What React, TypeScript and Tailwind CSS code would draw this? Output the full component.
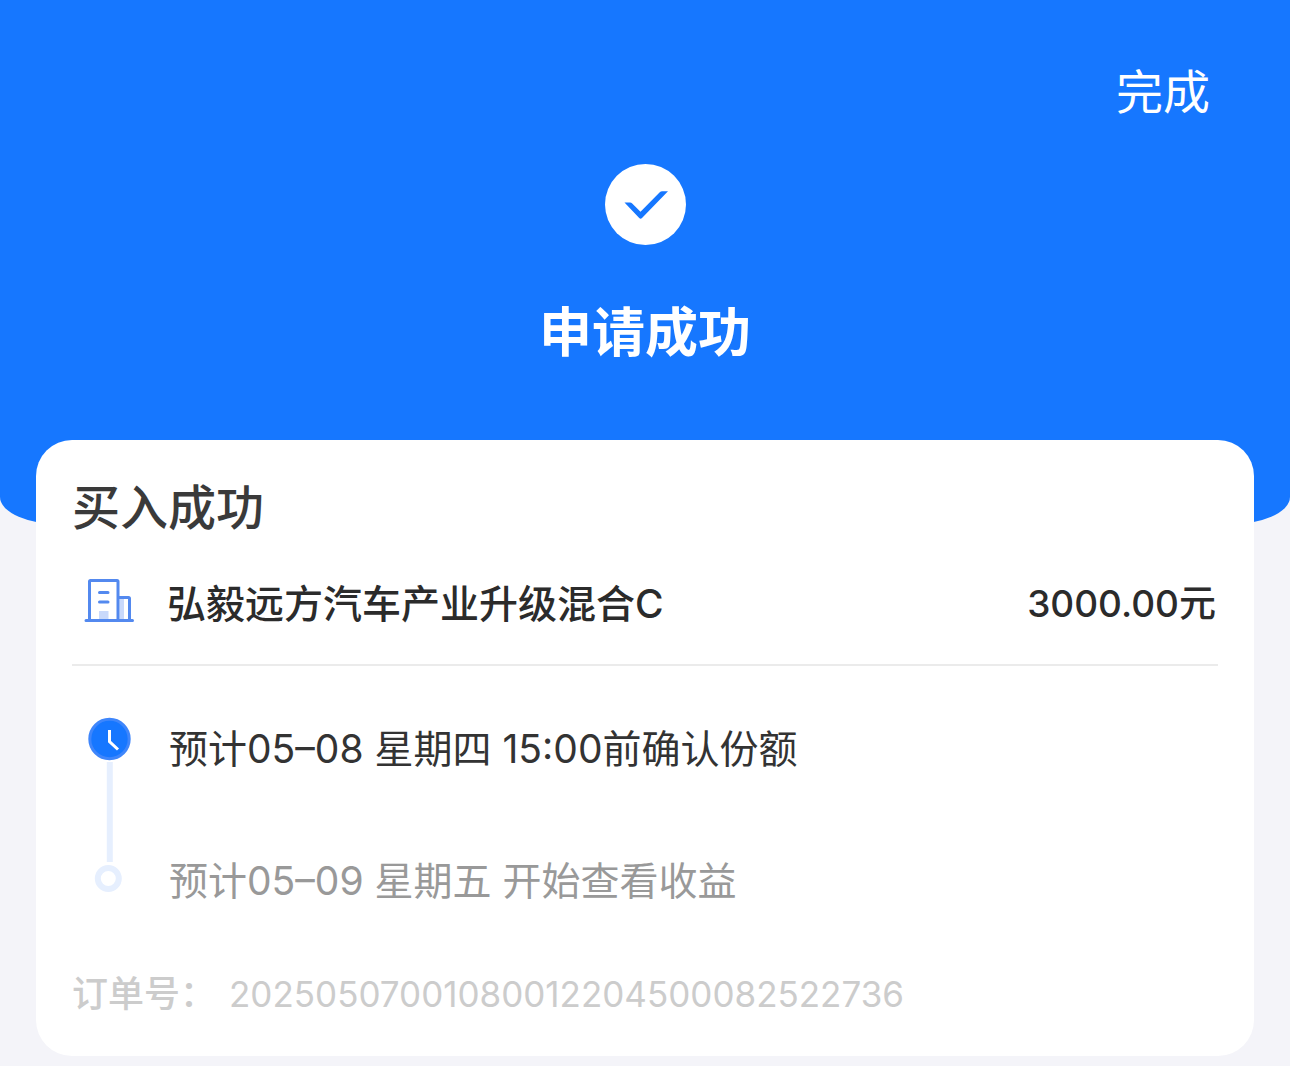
const steps = [
  { text: "预计05–08 星期四 15:00前确认份额", tone: "text-[#333333]" },
  { text: "预计05–09 星期五 开始查看收益", tone: "text-[#999999]" },
];

function CheckBadge() {
  return (
    <svg className="mt-9 size-[81px]" viewBox="0 0 81 81" aria-hidden="true">
      <circle cx="40.5" cy="40.5" r="40.5" fill="#fff" />
      <path d="M19.500 38.500H25Q26.300 38.500 27.200 39.400L35.500 47.700L54.500 28.500Q55.700 27.300 57.300 27.300H63L37 54Q35.600 55.400 34.200 54Z" fill="#1677ff" />
    </svg>
  );
}

function BuildingIcon() {
  return (
    <svg className="h-[52px] w-[50px] shrink-0" viewBox="0 0 50 52" fill="none" aria-hidden="true">
      <rect x="15" y="33" width="9.500" height="9" fill="#c9d9fb" />
      <rect x="35.500" y="20" width="4.500" height="22" fill="#c9d9fb" />
      <g stroke="#5389ef" strokeWidth="3">
        <path d="M5.500 42V3.500a1 1 0 0 1 1-1H33a1 1 0 0 1 1 1V42" />
        <path d="M34 19.500H44.500a1 1 0 0 1 1 1V42" />
        <path d="M2 42.500H48.500M15.500 14.500H24M15.500 24H24" strokeLinecap="round" />
      </g>
    </svg>
  );
}

function TimelineTrack() {
  return (
    <svg className="h-[176px] w-[44px] shrink-0" viewBox="0 0 44 176" fill="none" aria-hidden="true">
      <circle cx="22.500" cy="22" r="19.700" fill="#1677ff" stroke="#3f86fb" strokeWidth="3" />
      <path d="M22.500 13V24.500L31 32.500" stroke="#fff" strokeWidth="3" />
      <path d="M22.800 45V145" stroke="#e6effe" strokeWidth="6" />
      <circle cx="21.300" cy="161.500" r="10.500" stroke="#e6effe" strokeWidth="6" />
    </svg>
  );
}

export default function App() {
  return (
    <main className="min-h-screen bg-[#f4f4f9] pb-2.5 font-['Inter','Noto_Sans_CJK_SC',sans-serif]">
      <header className="flex flex-col items-center rounded-b-[64px_28px] bg-[#1677ff] pt-14 pb-[156px] text-white">
        <button type="button" className="mr-20 self-end text-[47px] leading-[72px]">
          完成
        </button>
        <CheckBadge />
        <h1 className="mt-[52px] text-[53px] leading-[72px] font-bold">申请成功</h1>
      </header>

      <section className="mx-9 -mt-[85px] rounded-[36px] bg-white px-9 pt-8 pb-8">
        <h2 className="text-[48px] leading-[72px] font-medium text-[#3a3a3a]">买入成功</h2>

        <div className="flex items-center justify-between border-b-2 border-[#ebebeb] py-[30px] text-[39px] leading-[60px] font-medium text-[#2b2b2b]">
          <div className="flex items-center gap-[33px] pl-3">
            <BuildingIcon />
            <span>弘毅远方汽车产业升级混合C</span>
          </div>
          <span className="pr-0.5 text-[37px]">3000.00元</span>
        </div>

        <div className="flex gap-[38px] pt-[51px] pl-[15px]">
          <TimelineTrack />
          <ol className="flex flex-col gap-[72px] pt-0.5 text-[39px] leading-[60px]">
            {steps.map((step) => (
              <li key={step.text} className={step.tone}>
                {step.text}
              </li>
            ))}
          </ol>
        </div>

        <dl className="mt-[53px] flex gap-[13px] text-[36px] leading-[60px] text-[#cccccc]">
          <dt className="font-medium">订单号：</dt>
          <dd className="text-[35px]">20250507001080012204500082522736</dd>
        </dl>
      </section>
    </main>
  );
}
